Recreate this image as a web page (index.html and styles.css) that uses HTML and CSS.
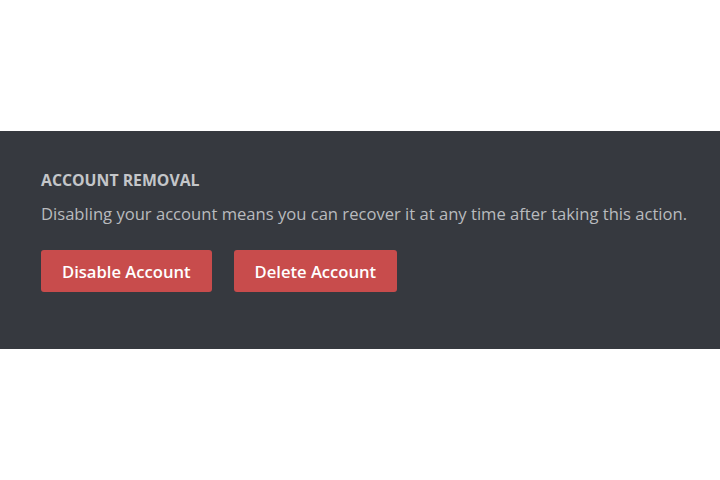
FILE: index.html
```html
<!DOCTYPE html>
<html>
<head>
<meta charset="utf-8">
<link rel="stylesheet" href="styles.css">
</head>
<body>
<div class="page">
  <section class="panel">
    <h2 class="title">ACCOUNT REMOVAL</h2>
    <p class="desc">Disabling your account means you can recover it at any time after taking this action.</p>
    <div class="actions">
      <button class="btn">Disable Account</button>
      <button class="btn">Delete Account</button>
    </div>
  </section>
</div>
</body>
</html>
```
FILE: styles.css
```css
html, body {
  margin: 0;
  padding: 0;
  background: #ffffff;
}
.page {
  width: 720px;
  height: 480px;
  padding-top: 131px;
  box-sizing: border-box;
}
.panel {
  background: #36393f;
  height: 218px;
  box-sizing: border-box;
  padding: 39px 0 0 41px;
  font-family: "Open Sans", "Liberation Sans", sans-serif;
}
.title {
  margin: 0;
  font-size: 15.8px;
  font-weight: 700;
  color: #c4c6c9;
  line-height: 20px;
  letter-spacing: 0;
}
.desc {
  margin: 13px 0 0 0;
  font-size: 16.6px;
  line-height: 22px;
  color: #b9bbbe;
}
.actions {
  display: flex;
  gap: 22px;
  margin-top: 25px;
}
.btn {
  height: 42px;
  border: none;
  border-radius: 3px;
  background: #c84c4c;
  color: #ffffff;
  font-family: "Open Sans", "Liberation Sans", sans-serif;
  font-size: 16.6px;
  font-weight: 600;
  padding: 0 21px;
}
```
